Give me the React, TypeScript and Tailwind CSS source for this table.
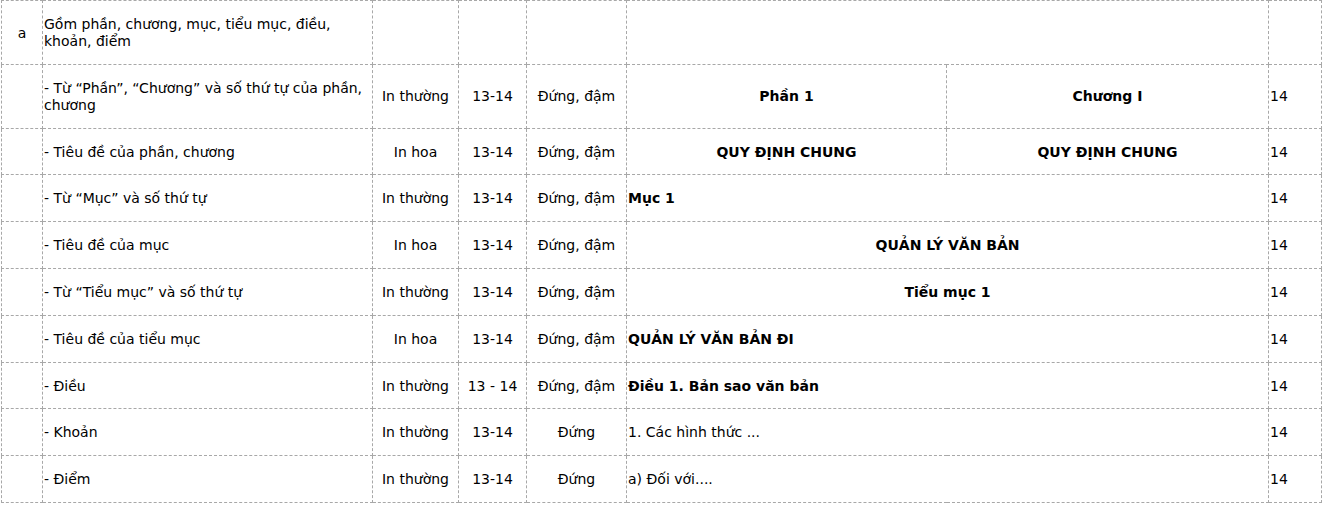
import React from 'react';

type Row = {
  no?: string;
  label: React.ReactNode;
  style?: string;
  size?: string;
  kind?: string;
  left?: React.ReactNode;
  right?: React.ReactNode;
  span?: React.ReactNode;
  spanAlign?: 'left' | 'center';
  pt?: string;
};

const rows: Row[] = [
  { no: 'a', label: 'Gồm phần, chương, mục, tiểu mục, điều, khoản, điểm' },
  {
    label: (
      <>
        - Từ “Phần”, “Chương” và số thứ tự của phần,
        <br />
        chương
      </>
    ),
    style: 'In thường',
    size: '13-14',
    kind: 'Đứng, đậm',
    left: 'Phần 1',
    right: 'Chương I',
    pt: '14',
  },
  {
    label: '- Tiêu đề của phần, chương',
    style: 'In hoa',
    size: '13-14',
    kind: 'Đứng, đậm',
    left: 'QUY ĐỊNH CHUNG',
    right: 'QUY ĐỊNH CHUNG',
    pt: '14',
  },
  { label: '- Từ “Mục” và số thứ tự', style: 'In thường', size: '13-14', kind: 'Đứng, đậm', span: <b>Mục 1</b>, spanAlign: 'left', pt: '14' },
  { label: '- Tiêu đề của mục', style: 'In hoa', size: '13-14', kind: 'Đứng, đậm', span: <b>QUẢN LÝ VĂN BẢN</b>, spanAlign: 'center', pt: '14' },
  { label: '- Từ “Tiểu mục” và số thứ tự', style: 'In thường', size: '13-14', kind: 'Đứng, đậm', span: <b>Tiểu mục 1</b>, spanAlign: 'center', pt: '14' },
  { label: '- Tiêu đề của tiểu mục', style: 'In hoa', size: '13-14', kind: 'Đứng, đậm', span: <b>QUẢN LÝ VĂN BẢN ĐI</b>, spanAlign: 'left', pt: '14' },
  { label: '- Điều', style: 'In thường', size: '13 - 14', kind: 'Đứng, đậm', span: <b>Điều 1. Bản sao văn bản</b>, spanAlign: 'left', pt: '14' },
  { label: '- Khoản', style: 'In thường', size: '13-14', kind: 'Đứng', span: '1. Các hình thức ...', spanAlign: 'left', pt: '14' },
  { label: '- Điểm', style: 'In thường', size: '13-14', kind: 'Đứng', span: 'a) Đối với....', spanAlign: 'left', pt: '14' },
];

const cell = 'border border-dashed border-[#a8a8a8] px-px pt-[15px] pb-[13.8px] align-middle';

export default function App() {
  return (
    <div className="bg-white min-h-screen pl-px font-['DejaVu_Sans',sans-serif] text-[14px] leading-[17px] text-black">
      <table className="table-fixed border-collapse w-[1320px]">
        <colgroup>
          <col className="w-[41px]" />
          <col className="w-[330px]" />
          <col className="w-[86px]" />
          <col className="w-[68px]" />
          <col className="w-[100px]" />
          <col className="w-[320px]" />
          <col className="w-[322px]" />
          <col className="w-[53px]" />
        </colgroup>
        <tbody>
          {rows.map((r, i) => (
            <tr key={i}>
              <td className={`${cell} text-center`}>{r.no}</td>
              <td className={cell}>{r.label}</td>
              <td className={`${cell} text-center`}>{r.style}</td>
              <td className={`${cell} text-center`}>{r.size}</td>
              <td className={`${cell} text-center`}>{r.kind}</td>
              {r.left !== undefined ? (
                <>
                  <td className={`${cell} text-center font-bold`}>{r.left}</td>
                  <td className={`${cell} text-center font-bold`}>{r.right}</td>
                </>
              ) : (
                <td colSpan={2} className={`${cell} ${r.spanAlign === 'center' ? 'text-center' : 'text-left'}`}>
                  {r.span}
                </td>
              )}
              <td className={cell}>{r.pt}</td>
            </tr>
          ))}
        </tbody>
      </table>
    </div>
  );
}
